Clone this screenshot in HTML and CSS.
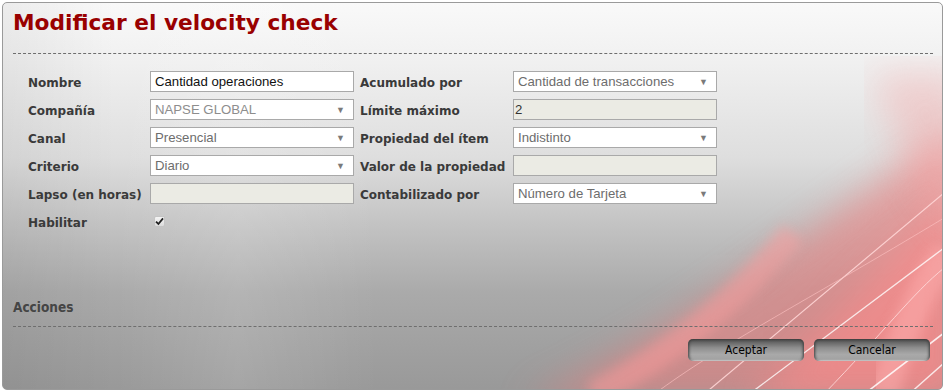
FILE: index.html
```html
<!DOCTYPE html>
<html>
<head>
    <meta charset="utf-8">
    <link rel="stylesheet" href="styles.css">
</head>
<body>
    <div class="panel">
        <svg class="backdrop" width="941" height="388" viewBox="0 0 941 388">
            <defs>
                <filter id="blur8"><feGaussianBlur stdDeviation="18"/></filter>
                <filter id="blur4"><feGaussianBlur stdDeviation="6"/></filter>
                <filter id="blur1"><feGaussianBlur stdDeviation="0.6"/></filter>
            </defs>
            <!-- soft red glows -->
            <path d="M520 400 C 680 330, 800 230, 960 120 L 960 400 Z" fill="#f27d7d" opacity="0.55" filter="url(#blur8)"/>
            <path d="M740 400 C 830 320, 900 240, 960 180 L 960 400 Z" fill="#ff8a8a" opacity="0.6" filter="url(#blur8)"/>
            <path d="M870 70 C 890 140, 920 200, 960 240 L 960 70 Z" fill="#f6a6a6" opacity="0.4" filter="url(#blur8)"/>
            <path d="M590 392 C 670 350, 730 300, 790 230" stroke="#ff9c9c" stroke-width="26" fill="none" opacity="0.45" filter="url(#blur4)"/>
            <path d="M880 392 C 900 330, 920 280, 945 250" stroke="#ffb0b0" stroke-width="30" fill="none" opacity="0.5" filter="url(#blur4)"/>
            <!-- thin light streaks -->
            <path d="M700 392 L 941 190" stroke="#ffd6d6" stroke-width="1.2" fill="none" opacity="0.9" filter="url(#blur1)"/>
            <path d="M745 392 L 941 245" stroke="#ffffff" stroke-width="1.4" fill="none" opacity="0.8" filter="url(#blur1)"/>
            <path d="M860 392 L 941 330" stroke="#ffffff" stroke-width="1.6" fill="none" opacity="0.85" filter="url(#blur1)"/>
            <path d="M820 392 C 880 330, 910 290, 941 265" stroke="#ffe0e0" stroke-width="1" fill="none" opacity="0.8"/>
            <path d="M650 392 C 720 340, 800 300, 941 215" stroke="#ffc4c4" stroke-width="1" fill="none" opacity="0.6"/>
            <path d="M905 392 L 941 360" stroke="#ffffff" stroke-width="1.4" fill="none" opacity="0.8" filter="url(#blur1)"/>
        </svg>

        <h1 class="title">Modificar el velocity check</h1>
        <div class="sep"></div>

        <div class="form">
            <label class="lbl">Nombre</label>
            <div class="field"><span class="val dark">Cantidad operaciones</span></div>
            <label class="lbl">Acumulado por</label>
            <div class="field"><span class="val">Cantidad de transacciones</span><span class="arrow">▼</span></div>

            <label class="lbl">Compañía</label>
            <div class="field"><span class="val faded">NAPSE GLOBAL</span><span class="arrow">▼</span></div>
            <label class="lbl">Límite máximo</label>
            <div class="field off"><span class="val dark">2</span></div>

            <label class="lbl">Canal</label>
            <div class="field"><span class="val">Presencial</span><span class="arrow">▼</span></div>
            <label class="lbl">Propiedad del ítem</label>
            <div class="field"><span class="val">Indistinto</span><span class="arrow">▼</span></div>

            <label class="lbl">Criterio</label>
            <div class="field"><span class="val">Diario</span><span class="arrow">▼</span></div>
            <label class="lbl">Valor de la propiedad</label>
            <div class="field off"></div>

            <label class="lbl">Lapso (en horas)</label>
            <div class="field off"></div>
            <label class="lbl">Contabilizado por</label>
            <div class="field"><span class="val">Número de Tarjeta</span><span class="arrow">▼</span></div>

            <label class="lbl">Habilitar</label>
            <div class="check-cell">
                <span class="check">
                    <svg width="9" height="9" viewBox="0 0 9 9"><path d="M1 4.6 L3.4 7 L8 1.4" stroke="#222" stroke-width="1.8" fill="none"/></svg>
                </span>
            </div>
        </div>

        <div class="actions-title">Acciones</div>
        <div class="sep"></div>
        <div class="buttons">
            <button class="btn">Aceptar</button>
            <button class="btn">Cancelar</button>
        </div>
    </div>
</body>
</html>
```

FILE: styles.css
```css
body {
    margin: 0;
    padding: 2px;
    background: #ffffff;
}

.panel {
    position: relative;
    width: 941px;
    height: 388px;
    box-sizing: border-box;
    border: 1px solid #9a9a9a;
    border-radius: 5px;
    padding: 0 9px 0 10px;
    overflow: hidden;
    background:
        linear-gradient(to right, rgba(0,0,0,0.05) 0%, rgba(255,255,255,0) 12%, rgba(255,255,255,0.12) 25%, rgba(255,255,255,0) 40%, rgba(0,0,0,0) 100%),
        linear-gradient(to bottom, #f9f9f9 0%, #f1f1f1 14%, #dedede 40%, #c2c2c2 58%, #aaaaaa 75%, #999999 100%);
}

.backdrop {
    position: absolute;
    left: 0;
    top: 0;
    z-index: 0;
}

.title, .sep, .form, .actions-title, .buttons {
    position: relative;
    z-index: 1;
}

.title {
    margin: 0;
    padding-top: 7px;
    height: 43px;
    box-sizing: border-box;
    font-family: "DejaVu Sans", Verdana, sans-serif;
    font-weight: bold;
    font-size: 21.7px;
    line-height: 26px;
    color: #990000;
}

.sep {
    border-top: 1px dashed #6e6e6e;
    margin-top: 7px;
}

.form {
    display: grid;
    grid-template-columns: 122px 210px 153px 204px;
    grid-auto-rows: 21px;
    row-gap: 7px;
    padding-left: 15px;
    margin-top: 17px;
}

.lbl {
    font-family: "DejaVu Sans", Verdana, sans-serif;
    font-weight: bold;
    font-size: 12px;
    line-height: 21px;
    color: #3a3a3a;
    white-space: nowrap;
    padding-top: 2px;
}

.field {
    width: 204px;
    height: 21px;
    box-sizing: border-box;
    border: 1px solid #a9a9a9;
    background: #ffffff;
    display: flex;
    align-items: center;
    justify-content: space-between;
    padding: 0 8px 0 4px;
    font-family: "Liberation Sans", Arial, sans-serif;
    font-size: 13.2px;
}

.field.off {
    background: #ebebe4;
    padding-left: 1px;
}

.val {
    color: #6d6d6d;
}

.val.dark {
    color: #111111;
}

.field.off .val.dark {
    color: #333333;
}

.val.faded {
    color: #8d8d8d;
}

.arrow {
    font-size: 9px;
    color: #7a7a7a;
}

.check-cell {
    display: flex;
    align-items: center;
    padding-left: 4px;
}

.check {
    width: 11px;
    height: 11px;
    box-sizing: border-box;
    border: 1px solid #c4c4c4;
    border-radius: 2px;
    background: linear-gradient(#f4f4f4, #dcdcdc);
    display: flex;
    align-items: center;
    justify-content: center;
}

.actions-title {
    margin-top: 67px;
    font-family: "DejaVu Sans Condensed", "DejaVu Sans", sans-serif;
    font-stretch: condensed;
    font-weight: bold;
    font-size: 13.5px;
    line-height: 17px;
    color: #454545;
}

.actions-title + .sep {
    margin-top: 10px;
}

.buttons {
    display: flex;
    justify-content: flex-end;
    gap: 10px;
    margin-top: 12px;
    padding-right: 3px;
}

.btn {
    width: 116px;
    height: 22px;
    border: none;
    border-radius: 5px;
    background: linear-gradient(to bottom, #3f3f3f 0%, #666666 15%, #8e8e8e 40%, #a9a9a9 70%, #a0a0a0 100%);
    box-shadow: inset 3px 0 3px -2px #3a3a3a, inset -3px 0 3px -2px #3a3a3a, inset 0 -1px 1px #cfcfcf;
    font-family: "DejaVu Sans Condensed", "DejaVu Sans", sans-serif;
    font-stretch: condensed;
    font-size: 12px;
    color: #000000;
    padding: 0;
    cursor: pointer;
}
```
